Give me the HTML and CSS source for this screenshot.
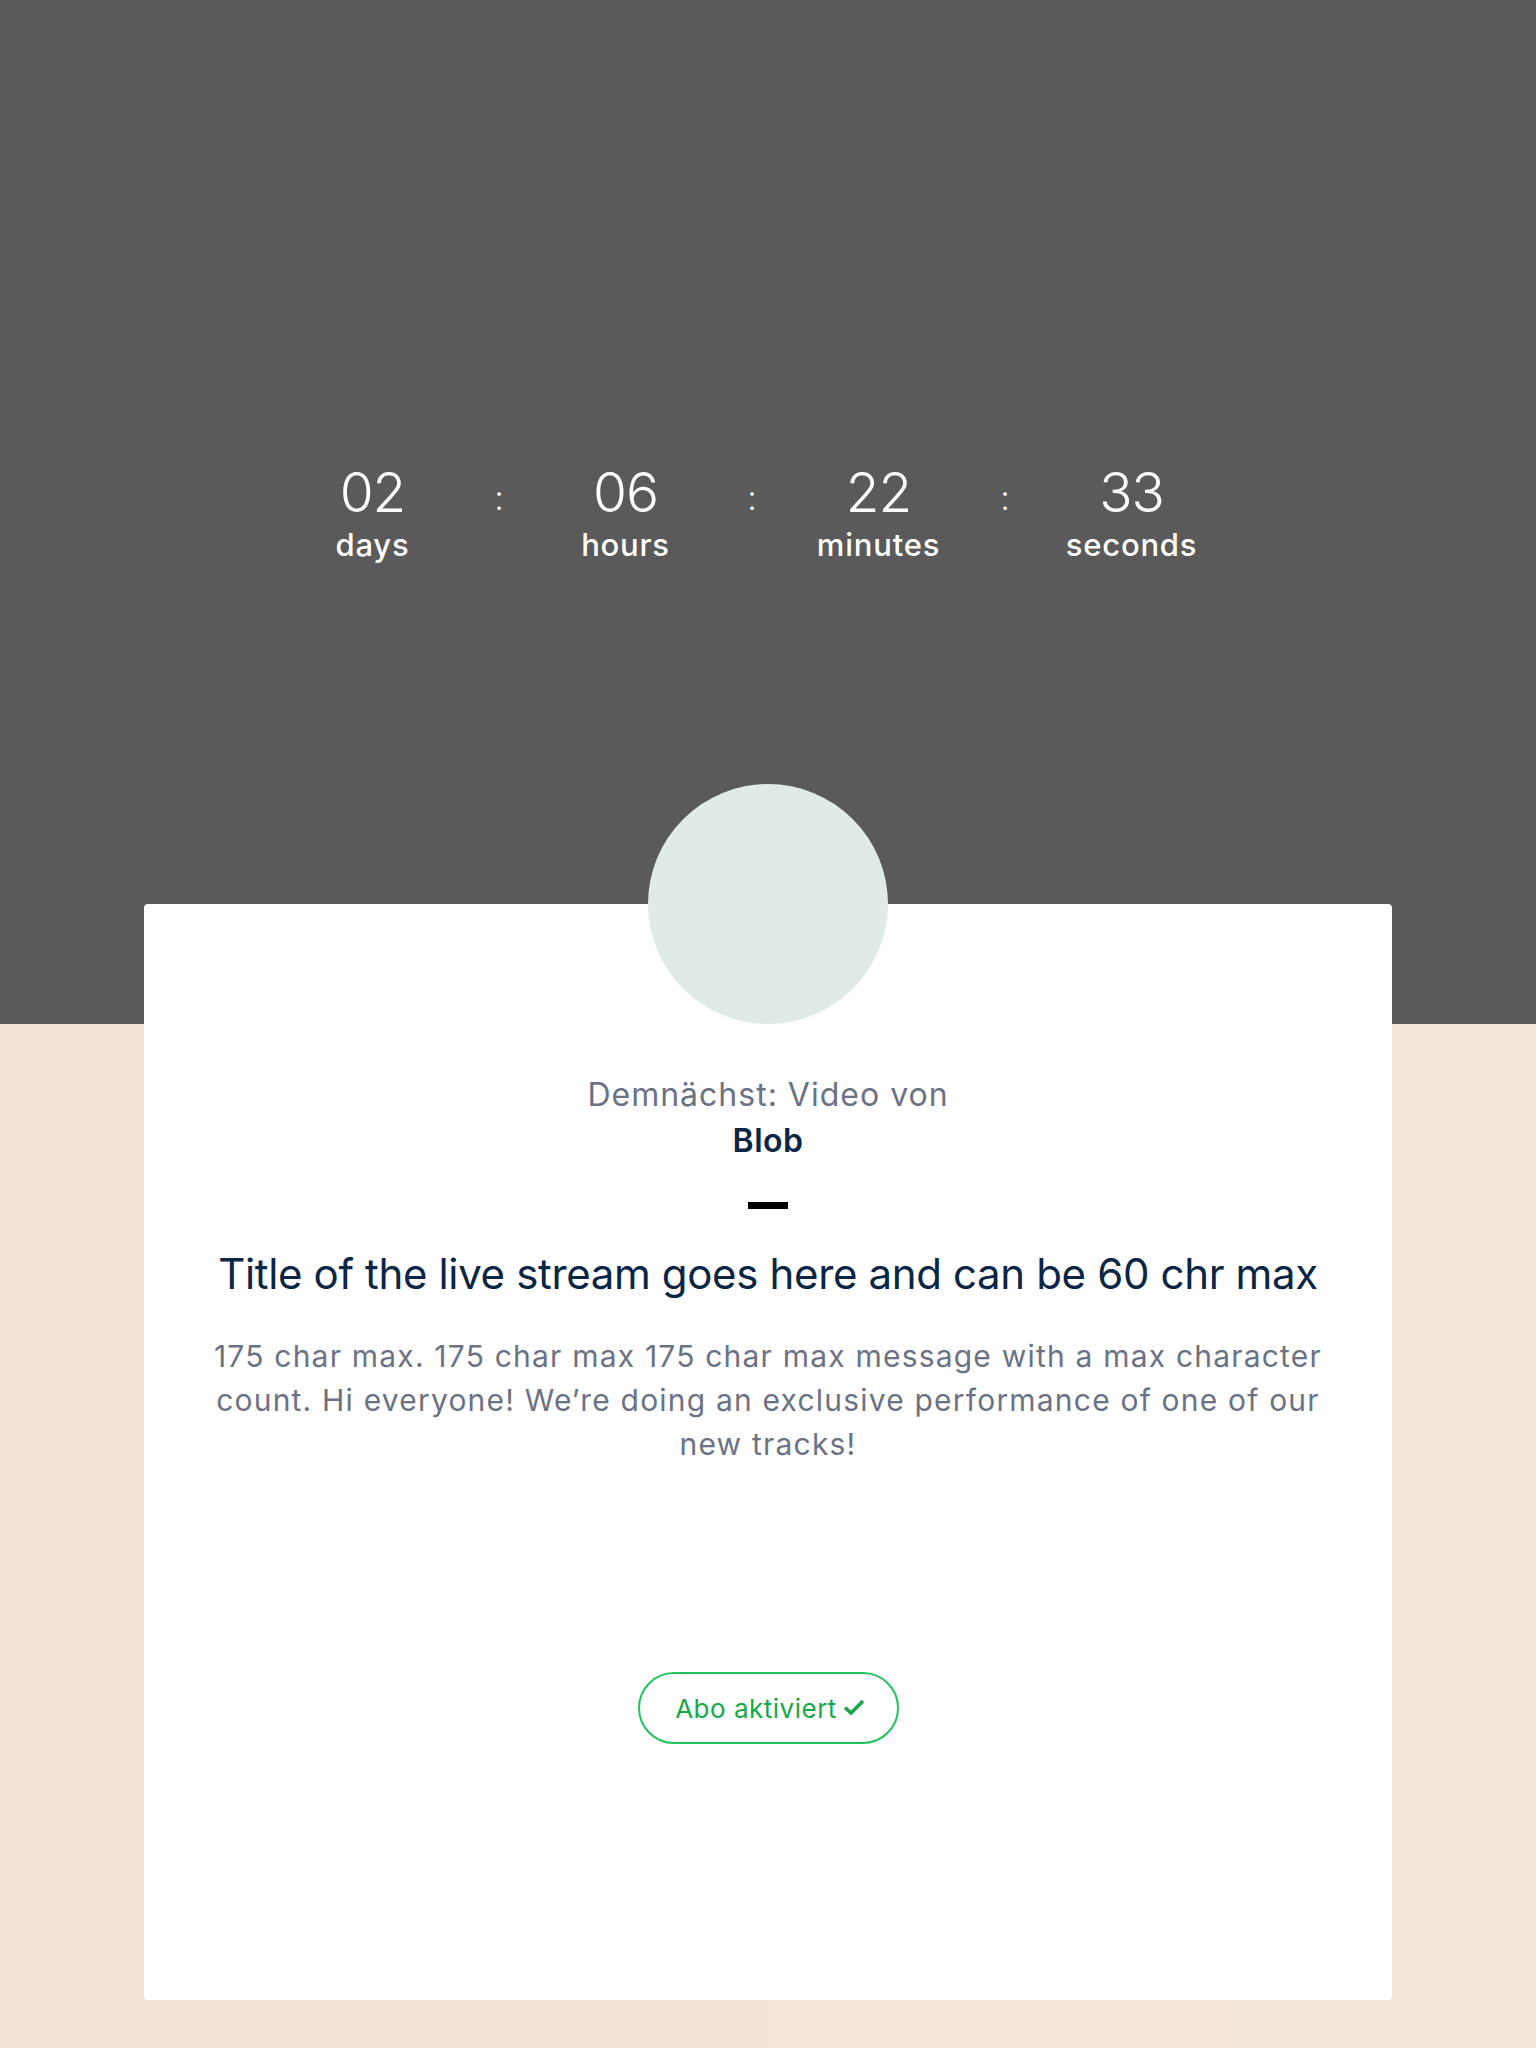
FILE: index.html
```html
<!DOCTYPE html>
<html lang="de">
<head>
<meta charset="utf-8">
<title>Countdown</title>
<link rel="stylesheet" href="styles.css">
</head>
<body>
<div class="page">
  <header class="hero">
    <div class="countdown">
      <div class="unit"><span class="num">02</span><span class="label">days</span></div>
      <div class="colon">:</div>
      <div class="unit"><span class="num">06</span><span class="label">hours</span></div>
      <div class="colon">:</div>
      <div class="unit"><span class="num">22</span><span class="label">minutes</span></div>
      <div class="colon">:</div>
      <div class="unit"><span class="num">33</span><span class="label">seconds</span></div>
    </div>
  </header>
  <main class="card">
    <div class="avatar"></div>
    <p class="upcoming">Demnächst: Video von<br><strong class="artist">Blob</strong></p>
    <div class="dash"></div>
    <h1 class="title">Title of the live stream goes here and can be 60 chr max</h1>
    <p class="message">175 char max. 175 char max 175 char max message with a max character count. Hi everyone! We’re doing an exclusive performance of one of our new tracks!</p>
    <button class="sub-btn" type="button">Abo aktiviert
      <svg class="check" width="22" height="16" viewBox="0 0 22 16" aria-hidden="true"><path d="M2 8.5 L8 14 L20 2" fill="none" stroke="currentColor" stroke-width="3.6" stroke-linecap="butt" stroke-linejoin="miter"/></svg>
    </button>
  </main>
</div>
</body>
</html>
```

FILE: styles.css
```css
* { box-sizing: border-box; }
html, body { margin: 0; padding: 0; }
body {
  font-family: Inter, "Noto Sans", "Liberation Sans", sans-serif;
  background: linear-gradient(90deg, #f5e2d7 0%, #f3e5d7 60%, #f2e7d6 100%);
  min-height: 2048px;
}
.page { display: flex; flex-direction: column; }
.hero {
  height: 1024px;
  background: #5a5a5a;
  padding-top: 460px;
}
.countdown {
  display: flex;
  justify-content: center;
  padding-right: 32px;
  color: #ffffff;
}
.unit {
  width: 128px;
  display: flex;
  flex-direction: column;
  align-items: center;
}
.num {
  font-size: 55px;
  font-weight: 300;
  line-height: 64px;
  letter-spacing: -1px;
}
.label {
  font-size: 31px;
  font-weight: 500;
  line-height: 36px;
  margin-top: 3px;
  letter-spacing: 0.8px;
}
.colon {
  width: 125px;
  text-align: center;
  font-size: 34px;
  font-weight: 300;
  line-height: 64px;
  padding-top: 6px;
}
.card {
  margin: -120px 144px 48px;
  height: 1096px;
  background: #ffffff;
  border-radius: 4px;
  display: flex;
  flex-direction: column;
  align-items: center;
  text-align: center;
}
.avatar {
  width: 240px;
  height: 240px;
  border-radius: 50%;
  background: #e0ebe7;
  margin-top: -120px;
  flex: none;
}
.upcoming {
  margin: 48px 0 0;
  font-size: 32px;
  line-height: 46px;
  color: #6b7283;
  letter-spacing: 1px;
}
.artist {
  color: #0b2545;
  font-weight: 600;
  letter-spacing: 0.5px;
}
.dash {
  width: 40px;
  height: 7px;
  background: #000000;
  margin-top: 38px;
}
.title {
  margin: 39px 0 0;
  font-size: 42px;
  font-weight: 400;
  line-height: 52px;
  color: #0b2545;
  letter-spacing: -0.35px;
}
.message {
  margin: 34px 0 0;
  width: 1134px;
  font-size: 30px;
  line-height: 44px;
  color: #6b7283;
  letter-spacing: 1.2px;
}
.sub-btn {
  margin-top: 206px;
  width: 261px;
  height: 72px;
  border: 2px solid #22c35e;
  border-radius: 36px;
  background: #ffffff;
  color: #15a84a;
  font-family: Inter, "Noto Sans", "Liberation Sans", sans-serif;
  font-size: 26px;
  font-weight: 400;
  letter-spacing: 0.5px;
  display: flex;
  align-items: center;
  justify-content: center;
  gap: 6px;
  padding: 0 0 0 4px;
}
.check { flex: none; margin-top: -2px; }
```
